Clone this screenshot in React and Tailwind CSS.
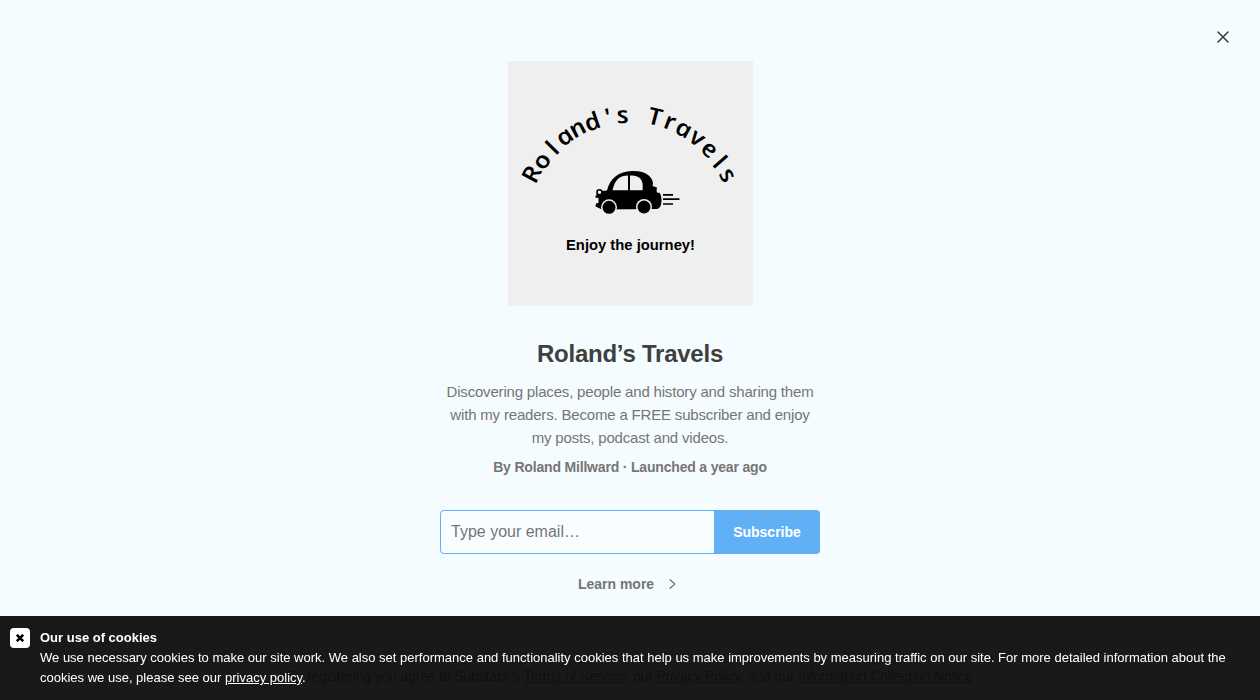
import React from 'react';

// x, y is the middle of the glyph, drop moves the baseline below it
const arcLetters = [
  { char: 'R', x: 23, y: 113.5, angle: -64, drop: 8.6 },
  { char: 'o', x: 34.7, y: 100.7, angle: -53, drop: 6.5 },
  { char: 'l', x: 43.5, y: 86.7, angle: -47, drop: 9 },
  { char: 'a', x: 57.3, y: 76.7, angle: -37, drop: 6.5 },
  { char: 'n', x: 70, y: 68.3, angle: -30, drop: 6.5 },
  { char: 'd', x: 83.3, y: 60.3, angle: -21, drop: 9 },
  { char: "'", x: 97.5, y: 50.5, angle: -14, drop: 14 },
  { char: 's', x: 114.7, y: 55.7, angle: -2, drop: 6.5 },
  { char: 'T', x: 146.7, y: 55.3, angle: 13, drop: 8.6 },
  { char: 'r', x: 161.5, y: 62, angle: 19, drop: 6.5 },
  { char: 'a', x: 175.3, y: 69, angle: 27, drop: 6.5 },
  { char: 'v', x: 188.7, y: 78, angle: 35, drop: 6.5 },
  { char: 'e', x: 200.7, y: 89, angle: 42, drop: 6.5 },
  { char: 'l', x: 212, y: 100, angle: 47, drop: 9 },
  { char: 's', x: 218.7, y: 114.7, angle: 59, drop: 6.5 },
];

const Logo = () => (
  <svg width="245" height="245" viewBox="0 0 245 245" className="block bg-[#efefef]">
    <g fontFamily='"Open Sans", "Noto Sans", sans-serif' fontStyle="italic" fontWeight="600" fontSize="23.500" textAnchor="middle">
      {arcLetters.map(({ char, x, y, angle, drop }, index) => (
        <text key={index} transform={`translate(${x} ${y}) rotate(${angle}) skewX(12) scale(1.15 1)`} y={drop}>
          {char}
        </text>
      ))}
    </g>

    {/* Car */}
    <path d="M90 130.500 L99 129.500 C102 117 111 110.500 124 110 C138 109.500 145 116 145 123 L144.500 125 L149 126.500 L148.500 129.500 C152 131 153.500 134 153.500 139 C153.500 144 152 147.500 149 148 L94 148.500 L87.500 145.500 L88 142.500 L90.500 142 L90.500 137 L87 136.500 Z" />
    <path d="M104.500 129.300 C107 118 112 114.500 120 114.500 V129.300 Z M122 114.500 C132 114 136 119 134.500 129.300 H122 Z" fill="#efefef" />
    <path d="M148.300 131 L150.500 132 L154 130.500 L150 129 Z" fill="#efefef" />
    <circle cx="91.500" cy="131.300" r="2.500" fill="#efefef" stroke="#000" strokeWidth="1.600" />
    <circle cx="101" cy="146.300" r="8" fill="#efefef" />
    <circle cx="101" cy="146.300" r="6.500" />
    <circle cx="136" cy="146" r="8" fill="#efefef" />
    <circle cx="136" cy="146" r="6.500" />
    <path d="M155 133.800 H165 M155 138.200 H171.500 M155 143 H165" stroke="#000" strokeWidth="1.700" />

    <text x="58" y="189" textLength="129" lengthAdjust="spacingAndGlyphs" fontFamily='"Liberation Sans", Arial, sans-serif' fontWeight="700" fontSize="15.200">
      Enjoy the journey!
    </text>
  </svg>
);

const CookieBanner = () => (
  <div className="fixed inset-x-0 bottom-0 flex h-[84px] items-start gap-2.5 bg-black/90 px-2.5 pt-3 text-[13px] leading-5 text-white">
    <button className="flex size-5 shrink-0 items-center justify-center rounded bg-white text-black" aria-label="Close">
      <svg width="8" height="8" viewBox="0 0 8 8" fill="none" stroke="currentColor" strokeWidth="2.600">
        <path d="M0.800 0.800 L7.200 7.200 M7.200 0.800 L0.800 7.200" />
      </svg>
    </button>
    <div>
      <p className="font-bold">Our use of cookies</p>
      <p>
        We use necessary cookies to make our site work. We also set performance and functionality cookies that help us make improvements by measuring traffic on our site. For more detailed information about the cookies we use, please see our <a href="#" className="underline">privacy policy</a>.
      </p>
    </div>
  </div>
);

const App = () => {
  return (
    <div className='relative flex h-[700px] flex-col items-center overflow-hidden bg-[#f5fcff] pt-[61px] font-["Liberation_Sans",Arial,sans-serif] text-[#757575]'>
      <button className="absolute top-[31px] right-[31px] text-[#404040]" aria-label="Close">
        <svg width="12" height="12" viewBox="0 0 12 12" fill="none" stroke="currentColor" strokeWidth="1.600" strokeLinecap="round">
          <path d="M1 1 L11 11 M11 1 L1 11" />
        </svg>
      </button>

      <Logo />

      <h1 className="mt-8 text-2xl leading-8 font-bold tracking-[-0.24px] text-[#404040]">Roland’s Travels</h1>
      <p className="mt-[10px] w-[380px] text-center text-[15px] leading-[23px] tracking-[-0.18px]">
        Discovering places, people and history and sharing them with my readers. Become a FREE subscriber and enjoy my posts, podcast and videos.
      </p>
      <p className="mt-2 text-sm leading-5 font-bold tracking-[-0.18px]">By Roland Millward · Launched a year ago</p>

      <form className="mt-[33px] flex h-11 w-[380px] overflow-hidden rounded">
        <input
          type="email"
          placeholder="Type your email…"
          className="min-w-0 flex-1 rounded-l border border-r-0 border-[#61aff5] bg-[#f8fdff] px-2.5 text-base placeholder:text-[#757575]"
        />
        <button type="button" className="w-[106px] bg-[#61b0f6] text-sm font-bold text-white">Subscribe</button>
      </form>

      <button className="mt-5 flex items-center gap-[15px] pr-1.5 text-sm leading-5 font-bold">
        Learn more
        <svg width="7" height="10" viewBox="0 0 7 10" fill="none" stroke="currentColor" strokeWidth="1.300" strokeLinecap="round" strokeLinejoin="round">
          <path d="M1 0.700 L5.800 5 L1 9.300" />
        </svg>
      </button>

      <p className="mt-[72px] text-sm leading-5 tracking-[-0.15px] whitespace-nowrap text-[#999999]">
        By registering you agree to Substack's <a href="#" className="underline">Terms of Service</a>, our <a href="#" className="underline">Privacy Policy</a>, and our <a href="#" className="underline">Information Collection Notice</a>
      </p>

      <CookieBanner />
    </div>
  );
};

export default App;
